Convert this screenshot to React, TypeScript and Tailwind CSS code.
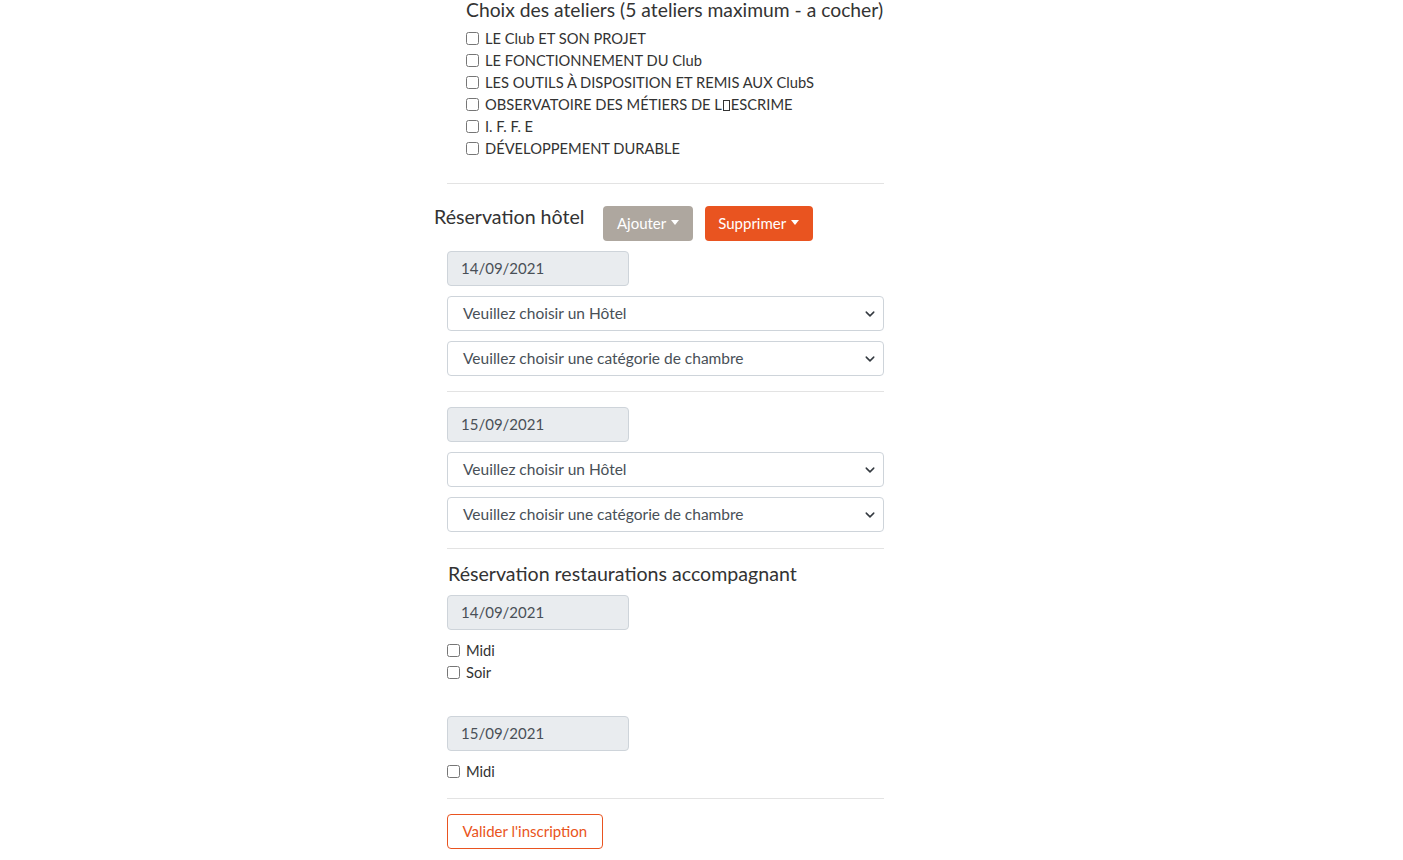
import React from "react";

const ateliers = [
  "LE Club ET SON PROJET",
  "LE FONCTIONNEMENT DU Club",
  "LES OUTILS À DISPOSITION ET REMIS AUX ClubS",
  "OBSERVATOIRE DES MÉTIERS DE L|ESCRIME",
  "I. F. F. E",
  "DÉVELOPPEMENT DURABLE",
];

function Tofu() {
  return <span className="mx-[1px] inline-block h-[11px] w-[7px] border border-[#333] align-[-1px]" />;
}

function Check({ label }: { label: string }) {
  const parts = label.split("|");
  return (
    <label className="flex h-[22px] items-center gap-[6px] text-[14.7px] text-[#333]">
      <input type="checkbox" className="m-0 h-[13px] w-[13px]" />
      <span>
        {parts.length > 1 ? (
          <>
            {parts[0]}
            <Tofu />
            {parts[1]}
          </>
        ) : (
          label
        )}
      </span>
    </label>
  );
}

function DateField({ value }: { value: string }) {
  return (
    <div className="flex h-[35px] w-[182px] items-center rounded-[4px] border border-[#ced4da] bg-[#e9ecef] px-[13px] text-[15px] text-[#495057]">
      {value}
    </div>
  );
}

function SelectField({ value }: { value: string }) {
  return (
    <div className="flex h-[35px] w-[437px] items-center justify-between rounded-[4px] border border-[#ced4da] bg-white pl-[15px] pr-[7px] text-[15.5px] text-[#495057]">
      <span>{value}</span>
      <svg width="12" height="10" viewBox="0 0 16 16" fill="none">
        <path d="M2 5l6 6 6-6" stroke="#343a40" strokeWidth="2.4" strokeLinecap="round" strokeLinejoin="round" />
      </svg>
    </div>
  );
}

function HotelDay({ date }: { date: string }) {
  return (
    <div className="flex flex-col gap-[10px]">
      <DateField value={date} />
      <SelectField value="Veuillez choisir un Hôtel" />
      <SelectField value="Veuillez choisir une catégorie de chambre" />
    </div>
  );
}

function Rule() {
  return <hr className="w-[437px] border-0 border-t border-[#e3e3e3]" />;
}

export default function App() {
  return (
    <div className="min-h-[860px] bg-white font-['Lato',sans-serif] text-[#333]">
      <div className="ml-[447px] flex w-[437px] flex-col pb-[12px]">
        <div className="pl-[19px]">
          <h5 className="-mt-[2px] whitespace-nowrap text-[19.3px] leading-[24px] text-[#333]">
            Choix des ateliers (5 ateliers maximum - a cocher)
          </h5>
          <div className="mt-[5px] flex flex-col">
            {ateliers.map((a) => (
              <Check key={a} label={a} />
            ))}
          </div>
        </div>

        <div className="mt-[24px]">
          <Rule />
        </div>

        <div className="-ml-[13px] mt-[22px] flex items-start gap-[19px]">
          <h5 className="mt-[-1px] text-[19.6px] leading-[24px]">Réservation hôtel</h5>
          <button className="flex h-[35px] items-center gap-[5px] rounded-[4px] bg-[#aea79f] px-[13.5px] text-[15px] text-white">
            Ajouter
            <span className="mt-[-2px] h-0 w-0 border-x-[4px] border-t-[5px] border-x-transparent border-t-white" />
          </button>
          <button className="ml-[-7px] flex h-[35px] items-center gap-[5px] rounded-[4px] bg-[#e95420] px-[13.5px] text-[15px] text-white">
            Supprimer
            <span className="mt-[-2px] h-0 w-0 border-x-[4px] border-t-[5px] border-x-transparent border-t-white" />
          </button>
        </div>

        <div className="mt-[10px]">
          <HotelDay date="14/09/2021" />
        </div>
        <div className="my-[15px]">
          <Rule />
        </div>
        <HotelDay date="15/09/2021" />
        <div className="mt-[16px]">
          <Rule />
        </div>

        <h5 className="mt-[13px] pl-[1px] text-[19.6px] leading-[24px]">
          Réservation restaurations accompagnant
        </h5>
        <div className="mt-[9px]">
          <DateField value="14/09/2021" />
        </div>
        <div className="mt-[9px] flex flex-col">
          <Check label="Midi" />
          <Check label="Soir" />
        </div>
        <div className="mt-[33px]">
          <DateField value="15/09/2021" />
        </div>
        <div className="mt-[9px]">
          <Check label="Midi" />
        </div>
        <div className="mt-[16px]">
          <Rule />
        </div>
        <div className="mt-[15px]">
          <button className="h-[35px] rounded-[4px] border border-[#e95420] bg-white px-[14.5px] text-[15px] text-[#e95420]">
            Valider l'inscription
          </button>
        </div>
      </div>
    </div>
  );
}
